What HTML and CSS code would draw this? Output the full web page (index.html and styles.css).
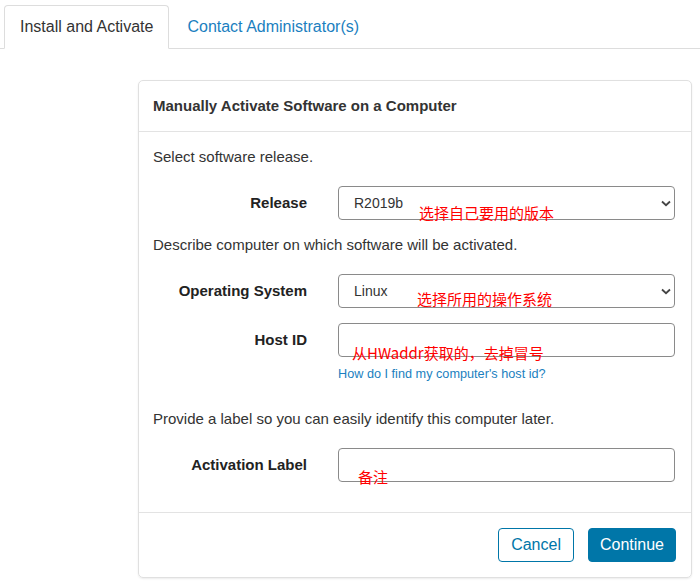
FILE: index.html
```html
<!DOCTYPE html>
<html lang="en">
<head>
<meta charset="utf-8">
<title>Install and Activate</title>
<link rel="stylesheet" href="styles.css">
</head>
<body>
<ul class="tabs">
  <li class="tab active"><span>Install and Activate</span></li>
  <li class="tab"><a href="#">Contact Administrator(s)</a></li>
</ul>
<div class="page">
  <div class="card">
    <div class="card-header">Manually Activate Software on a Computer</div>
    <div class="card-body">
      <p class="hint">Select software release.</p>
      <div class="row">
        <label class="label">Release</label>
        <div class="field">
          <div class="select">R2019b
            <svg class="chev" width="10" height="7" viewBox="0 0 10 7"><path d="M1 1.5 L5 5.2 L9 1.5" fill="none" stroke="#444" stroke-width="1.8"/></svg>
          </div>
          <span class="note note-release">选择自己要用的版本</span>
        </div>
      </div>
      <p class="hint">Describe computer on which software will be activated.</p>
      <div class="row">
        <label class="label">Operating System</label>
        <div class="field">
          <div class="select">Linux
            <svg class="chev" width="10" height="7" viewBox="0 0 10 7"><path d="M1 1.5 L5 5.2 L9 1.5" fill="none" stroke="#444" stroke-width="1.8"/></svg>
          </div>
          <span class="note note-os">选择所用的操作系统</span>
        </div>
      </div>
      <div class="row row-tight">
        <label class="label">Host ID</label>
        <div class="field">
          <div class="input"></div>
          <span class="note note-host">从HWaddr获取的，去掉冒号</span>
          <a class="help" href="#">How do I find my computer's host id?</a>
        </div>
      </div>
      <p class="hint hint-label">Provide a label so you can easily identify this computer later.</p>
      <div class="row">
        <label class="label">Activation Label</label>
        <div class="field">
          <div class="input"></div>
          <span class="note note-label">备注</span>
        </div>
      </div>
    </div>
    <div class="card-footer">
      <button class="btn btn-outline">Cancel</button>
      <button class="btn btn-primary">Continue</button>
    </div>
  </div>
</div>
</body>
</html>
```
FILE: styles.css
```css
* { box-sizing: border-box; }
html, body { margin: 0; padding: 0; background: #fff; }
body {
  font-family: "Liberation Sans", Arial, sans-serif;
  font-size: 15px;
  color: #333;
}
.tabs {
  list-style: none;
  margin: 0;
  padding: 5px 0 0 4px;
  display: flex;
  border-bottom: 1px solid #ddd;
  height: 49px;
}
.tab {
  margin-right: 2px;
  margin-bottom: -1px;
  border: 1px solid transparent;
  border-radius: 4px 4px 0 0;
  padding: 10px 15px;
  font-size: 16px;
  line-height: 22px;
  height: 44px;
}
.tab.active {
  border-color: #ddd;
  border-bottom-color: #fff;
  background: #fff;
  color: #333;
}
.tab a { color: #1b7fc0; text-decoration: none; }
.page { padding: 31px 8px 8px 138px; }
.card {
  border: 1px solid #e0e0e0;
  border-radius: 5px;
  box-shadow: 0 1px 2px rgba(0,0,0,0.08);
}
.card-header {
  padding: 15px 14px;
  line-height: 20px;
  font-weight: bold;
  font-size: 15px;
  color: #333;
  border-bottom: 1px solid #e3e3e3;
}
.card-body { padding: 15px 15px 0 14px; }
.hint { margin: 0; line-height: 20px; }
.hint-label { margin-top: 26px; }
.row {
  display: grid;
  grid-template-columns: 154px 1fr;
  column-gap: 31px;
  margin: 19px 1px 15px 0;
  align-items: start;
}
.row-tight { margin-top: 15px; margin-bottom: 0; }
.label {
  text-align: right;
  font-weight: bold;
  font-size: 15px;
  line-height: 34px;
  color: #222;
}
.field { position: relative; }
.select, .input {
  height: 34px;
  border: 1px solid #8a8a8a;
  border-radius: 4px;
  background: #fff;
  padding: 0 15px;
  line-height: 32px;
  font-size: 14px;
  color: #333;
}
.select { position: relative; }
.chev { position: absolute; right: 3px; top: 13px; }
.note {
  position: absolute;
  color: #ff0000;
  font-family: "Noto Sans CJK SC", "Liberation Sans", sans-serif;
  font-size: 15px;
  line-height: 15px;
  white-space: nowrap;
}
.note-release { left: 81px; top: 19px; }
.note-os { left: 79px; top: 17px; }
.note-host { left: 14px; top: 22px; }
.note-label { left: 20px; top: 21px; }
.help {
  display: block;
  margin-top: 9px;
  font-size: 12.7px;
  line-height: 17px;
  color: #1b7fc0;
  text-decoration: none;
}
.card-footer {
  border-top: 1px solid #e3e3e3;
  margin-top: 30px;
  padding: 15px;
  display: flex;
  justify-content: flex-end;
  gap: 14px;
}
.btn {
  height: 34px;
  padding: 0 12px;
  border-radius: 4px;
  font-family: "Liberation Sans", Arial, sans-serif;
  font-size: 16px;
  border: 1px solid #0076a8;
  cursor: pointer;
}
.btn-outline { background: #fff; color: #0076a8; }
.btn-primary { background: #0076a8; color: #fff; padding: 0 11px; }
```
